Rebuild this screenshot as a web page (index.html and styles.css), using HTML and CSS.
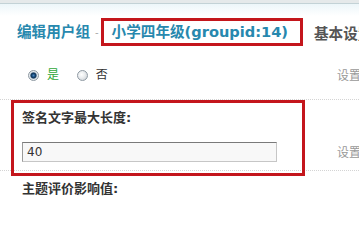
FILE: index.html
```html
<!DOCTYPE html>
<html lang="zh-CN">
<head>
<meta charset="utf-8">
<title>编辑用户组</title>
<link rel="stylesheet" href="styles.css">
</head>
<body>
<div class="topbar"></div>
<div class="header">
  <h1 class="title">编辑用户组</h1>
  <span class="sep">-</span>
  <span class="title hl">小学四年级(groupid:14)</span>
  <span class="tab">基本设置</span>
</div>
<div class="row line radios">
  <div class="main">
    <label class="opt"><span class="radio on"></span><span class="yes">是</span></label>
    <label class="opt"><span class="radio"></span><span class="no">否</span></label>
  </div>
  <div class="tip">设置是否允许该用户组使用签名</div>
</div>
<div class="group">
  <div class="row head">
    <div class="main">签名文字最大长度:</div>
  </div>
  <div class="row line field">
    <div class="main"><input class="text" type="text" value="40"></div>
    <div class="tip">设置签名文字的最大长度</div>
  </div>
</div>
<div class="row head">
  <div class="main">主题评价影响值:</div>
</div>
</body>
</html>
```
FILE: styles.css
```css
html, body {
  margin: 0;
  padding: 0;
  background: #fff;
  overflow: hidden;
}
body {
  width: 359px;
  height: 210px;
  font-family: "DejaVu Sans", "Noto Sans CJK SC", sans-serif;
  font-size: 12px;
  color: #333;
}
.topbar {
  height: 3px;
  background: #e5e9ea;
  border-bottom: 1px solid #c3d2d6;
}
.header {
  display: flex;
  align-items: center;
  padding: 14px 0 0 17px;
  height: 28px;
  background: linear-gradient(#edf6f9, #ffffff 12px);
  white-space: nowrap;
}
.title {
  margin: 0;
  font-size: 14.6px;
  font-weight: bold;
  color: #2788ae;
  line-height: 22px;
}
.sep {
  color: #aaa;
  font-size: 10px;
  margin: 0 2px 0 5px;
}
.hl {
  border: 3px solid #c4161c;
  padding: 0 12px 0 8px;
}
.tab {
  margin-left: 11px;
  font-size: 14.6px;
  font-weight: bold;
  color: #555;
}
.row {
  display: flex;
  align-items: center;
  white-space: nowrap;
}
.row.line {
  border-bottom: 1px dotted #d4d4d4;
}
.main {
  flex: 0 0 293px;
  padding-left: 22px;
}
.tip {
  flex: 1;
  padding-left: 22px;
  color: #999;
  font-size: 12px;
  overflow: hidden;
}
.radios {
  padding: 20px 0 13px;
  line-height: 18px;
}
.opt {
  display: inline-flex;
  align-items: center;
  margin-left: 6px;
}
.opt + .opt {
  margin-left: 14px;
}
.radio {
  box-sizing: border-box;
  width: 11px;
  height: 11px;
  border-radius: 50%;
  border: 1px solid #8f9aa3;
  background: radial-gradient(circle at 40% 40%, #ffffff 0, #eceef0 40%, #c6cbd0 100%);
  margin-right: 8px;
}
.radio.on {
  background: radial-gradient(circle at 50% 50%, #4a86bd 0, #1a4c7e 1.6px, #0e3050 2.6px, #8ea4b8 3.2px, #e9edf0 3.8px, #c8cdd2 100%);
}
.yes {
  color: #2fa83a;
}
.no {
  color: #333;
}
.group {
  position: relative;
}
.group::after {
  content: "";
  position: absolute;
  left: 11px;
  top: 0;
  width: 294px;
  height: 76px;
  box-sizing: border-box;
  border: 3px solid #c4161c;
  pointer-events: none;
}
.head {
  padding-top: 9px;
  line-height: 18px;
  font-size: 13px;
  font-weight: bold;
  color: #333;
}
.group .head {
  padding-bottom: 5px;
}
.field {
  padding: 10px 0 8px;
}
.text {
  box-sizing: border-box;
  width: 255px;
  height: 20px;
  margin: 0;
  padding: 0 4px;
  border: 1px solid #c6c6c6;
  border-top-color: #7a7a7a;
  border-left-color: #9a9a9a;
  background: #f8f8f8;
  font-family: "DejaVu Sans", sans-serif;
  font-size: 12px;
  color: #333;
  outline: none;
}
```
